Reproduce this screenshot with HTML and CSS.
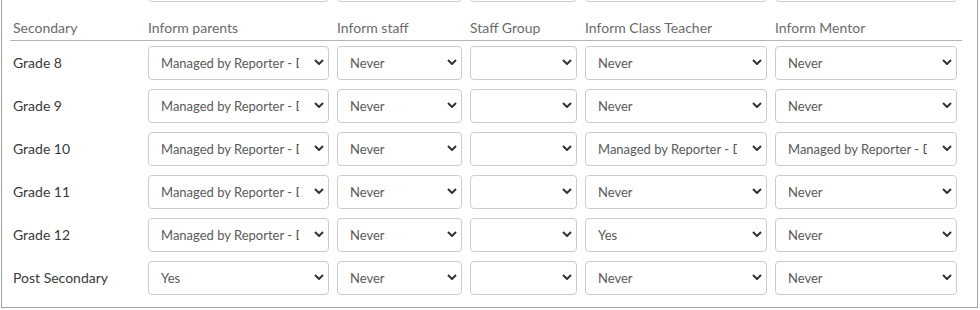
FILE: index.html
```html
<!DOCTYPE html>
<html>
<head>
<meta charset="utf-8">
<link rel="stylesheet" href="styles.css">
</head>
<body>
<div class="panel">
  <div class="row prev">
    <div class="label"></div>
    <div class="sel"><select class="ctl"><option></option></select><svg class="chev" width="10" height="6" viewBox="0 0 10 6"><path d="M1 1L5 5L9 1"/></svg></div>
    <div class="sel"><select class="ctl"><option></option></select><svg class="chev" width="10" height="6" viewBox="0 0 10 6"><path d="M1 1L5 5L9 1"/></svg></div>
    <div class="sel"><select class="ctl"><option></option></select><svg class="chev" width="10" height="6" viewBox="0 0 10 6"><path d="M1 1L5 5L9 1"/></svg></div>
    <div class="sel"><select class="ctl"><option></option></select><svg class="chev" width="10" height="6" viewBox="0 0 10 6"><path d="M1 1L5 5L9 1"/></svg></div>
    <div class="sel"><select class="ctl"><option></option></select><svg class="chev" width="10" height="6" viewBox="0 0 10 6"><path d="M1 1L5 5L9 1"/></svg></div>
  </div>

  <div class="table">
    <div class="row head">
      <div class="label">Secondary</div>
      <div>Inform parents</div>
      <div>Inform staff</div>
      <div>Staff Group</div>
      <div>Inform Class Teacher</div>
      <div>Inform Mentor</div>
    </div>

    <div class="body">
      <div class="row">
        <div class="label">Grade 8</div>
        <div class="sel"><select class="ctl"><option>Managed by Reporter - Default</option></select><svg class="chev" width="10" height="6" viewBox="0 0 10 6"><path d="M1 1L5 5L9 1"/></svg></div>
        <div class="sel"><select class="ctl"><option>Never</option></select><svg class="chev" width="10" height="6" viewBox="0 0 10 6"><path d="M1 1L5 5L9 1"/></svg></div>
        <div class="sel"><select class="ctl"><option></option></select><svg class="chev" width="10" height="6" viewBox="0 0 10 6"><path d="M1 1L5 5L9 1"/></svg></div>
        <div class="sel"><select class="ctl"><option>Never</option></select><svg class="chev" width="10" height="6" viewBox="0 0 10 6"><path d="M1 1L5 5L9 1"/></svg></div>
        <div class="sel"><select class="ctl"><option>Never</option></select><svg class="chev" width="10" height="6" viewBox="0 0 10 6"><path d="M1 1L5 5L9 1"/></svg></div>
      </div>

      <div class="row">
        <div class="label">Grade 9</div>
        <div class="sel"><select class="ctl"><option>Managed by Reporter - Default</option></select><svg class="chev" width="10" height="6" viewBox="0 0 10 6"><path d="M1 1L5 5L9 1"/></svg></div>
        <div class="sel"><select class="ctl"><option>Never</option></select><svg class="chev" width="10" height="6" viewBox="0 0 10 6"><path d="M1 1L5 5L9 1"/></svg></div>
        <div class="sel"><select class="ctl"><option></option></select><svg class="chev" width="10" height="6" viewBox="0 0 10 6"><path d="M1 1L5 5L9 1"/></svg></div>
        <div class="sel"><select class="ctl"><option>Never</option></select><svg class="chev" width="10" height="6" viewBox="0 0 10 6"><path d="M1 1L5 5L9 1"/></svg></div>
        <div class="sel"><select class="ctl"><option>Never</option></select><svg class="chev" width="10" height="6" viewBox="0 0 10 6"><path d="M1 1L5 5L9 1"/></svg></div>
      </div>

      <div class="row">
        <div class="label">Grade 10</div>
        <div class="sel"><select class="ctl"><option>Managed by Reporter - Default</option></select><svg class="chev" width="10" height="6" viewBox="0 0 10 6"><path d="M1 1L5 5L9 1"/></svg></div>
        <div class="sel"><select class="ctl"><option>Never</option></select><svg class="chev" width="10" height="6" viewBox="0 0 10 6"><path d="M1 1L5 5L9 1"/></svg></div>
        <div class="sel"><select class="ctl"><option></option></select><svg class="chev" width="10" height="6" viewBox="0 0 10 6"><path d="M1 1L5 5L9 1"/></svg></div>
        <div class="sel"><select class="ctl"><option>Managed by Reporter - Default</option></select><svg class="chev" width="10" height="6" viewBox="0 0 10 6"><path d="M1 1L5 5L9 1"/></svg></div>
        <div class="sel"><select class="ctl"><option>Managed by Reporter - Default</option></select><svg class="chev" width="10" height="6" viewBox="0 0 10 6"><path d="M1 1L5 5L9 1"/></svg></div>
      </div>

      <div class="row">
        <div class="label">Grade 11</div>
        <div class="sel"><select class="ctl"><option>Managed by Reporter - Default</option></select><svg class="chev" width="10" height="6" viewBox="0 0 10 6"><path d="M1 1L5 5L9 1"/></svg></div>
        <div class="sel"><select class="ctl"><option>Never</option></select><svg class="chev" width="10" height="6" viewBox="0 0 10 6"><path d="M1 1L5 5L9 1"/></svg></div>
        <div class="sel"><select class="ctl"><option></option></select><svg class="chev" width="10" height="6" viewBox="0 0 10 6"><path d="M1 1L5 5L9 1"/></svg></div>
        <div class="sel"><select class="ctl"><option>Never</option></select><svg class="chev" width="10" height="6" viewBox="0 0 10 6"><path d="M1 1L5 5L9 1"/></svg></div>
        <div class="sel"><select class="ctl"><option>Never</option></select><svg class="chev" width="10" height="6" viewBox="0 0 10 6"><path d="M1 1L5 5L9 1"/></svg></div>
      </div>

      <div class="row">
        <div class="label">Grade 12</div>
        <div class="sel"><select class="ctl"><option>Managed by Reporter - Default</option></select><svg class="chev" width="10" height="6" viewBox="0 0 10 6"><path d="M1 1L5 5L9 1"/></svg></div>
        <div class="sel"><select class="ctl"><option>Never</option></select><svg class="chev" width="10" height="6" viewBox="0 0 10 6"><path d="M1 1L5 5L9 1"/></svg></div>
        <div class="sel"><select class="ctl"><option></option></select><svg class="chev" width="10" height="6" viewBox="0 0 10 6"><path d="M1 1L5 5L9 1"/></svg></div>
        <div class="sel"><select class="ctl"><option>Yes</option></select><svg class="chev" width="10" height="6" viewBox="0 0 10 6"><path d="M1 1L5 5L9 1"/></svg></div>
        <div class="sel"><select class="ctl"><option>Never</option></select><svg class="chev" width="10" height="6" viewBox="0 0 10 6"><path d="M1 1L5 5L9 1"/></svg></div>
      </div>

      <div class="row">
        <div class="label">Post Secondary</div>
        <div class="sel"><select class="ctl"><option>Yes</option></select><svg class="chev" width="10" height="6" viewBox="0 0 10 6"><path d="M1 1L5 5L9 1"/></svg></div>
        <div class="sel"><select class="ctl"><option>Never</option></select><svg class="chev" width="10" height="6" viewBox="0 0 10 6"><path d="M1 1L5 5L9 1"/></svg></div>
        <div class="sel"><select class="ctl"><option></option></select><svg class="chev" width="10" height="6" viewBox="0 0 10 6"><path d="M1 1L5 5L9 1"/></svg></div>
        <div class="sel"><select class="ctl"><option>Never</option></select><svg class="chev" width="10" height="6" viewBox="0 0 10 6"><path d="M1 1L5 5L9 1"/></svg></div>
        <div class="sel"><select class="ctl"><option>Never</option></select><svg class="chev" width="10" height="6" viewBox="0 0 10 6"><path d="M1 1L5 5L9 1"/></svg></div>
      </div>
    </div>
  </div>
</div>
</body>
</html>
```

FILE: styles.css
```css
html, body {
  margin: 0;
  padding: 0;
  background: #ffffff;
  overflow: hidden;
}

body {
  font-family: Lato, "Open Sans", sans-serif;
  font-size: 14px;
  line-height: 20px;
  color: #333333;
}

.panel {
  box-sizing: border-box;
  width: 977px;
  margin-left: 1px;
  margin-top: -32px;
  border: 1px solid #a3a3a3;
  border-top: none;
  padding: 0 15px 12px 8px;
}

.row {
  display: grid;
  grid-template-columns: 130px 181px 125px 107px 182px 182px;
  column-gap: 8px;
  align-items: center;
  padding-right: 5px;
}

.label {
  padding-left: 3px;
  padding-bottom: 1px;
  color: #3a3a3a;
}

.table {
  margin-top: 16px;
}

.head {
  color: #6b6b6b;
  padding-bottom: 2px;
  border-bottom: 1px solid #b5b5b5;
  white-space: nowrap;
}

.head .label {
  color: #6b6b6b;
  padding-bottom: 0;
}

.body {
  display: flex;
  flex-direction: column;
  gap: 9px;
  padding-top: 5px;
}

.sel {
  position: relative;
  height: 34px;
}

.ctl {
  -webkit-appearance: none;
  appearance: none;
  box-sizing: border-box;
  display: block;
  width: 100%;
  height: 34px;
  margin: 0;
  padding: 6px 29px 6px 12px;
  border: 1px solid #cccccc;
  border-radius: 4px;
  background: #ffffff;
  color: #5a5a5a;
  font-family: Lato, "Open Sans", sans-serif;
  font-size: 13px;
  line-height: 20px;
  white-space: nowrap;
  overflow: hidden;
}

.chev {
  position: absolute;
  right: 5px;
  top: 13px;
  pointer-events: none;
}

.chev path {
  fill: none;
  stroke: #333333;
  stroke-width: 2;
}
```
